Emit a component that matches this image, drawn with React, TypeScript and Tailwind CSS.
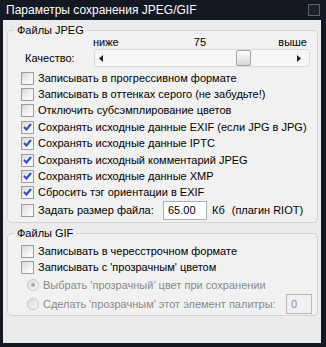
import React from "react";

const font = { fontFamily: '"Liberation Sans", Arial, sans-serif' };

const Check = ({ checked }: { checked?: boolean }) => (
  <span className="relative w-[13px] h-[13px] shrink-0 border border-[#9c9c9c] bg-gradient-to-br from-[#d8d8d8] via-[#f0f0f0] to-white">
    {checked && (
      <svg className="absolute left-[1px] top-[1px]" width="9" height="9" viewBox="0 0 9 9">
        <path d="M1 4 L3.5 6.5 L8 1" fill="none" stroke="#2c4fc4" strokeWidth="2" />
      </svg>
    )}
  </span>
);

const Radio = ({ checked }: { checked?: boolean }) => (
  <span className="relative w-[12px] h-[12px] shrink-0 rounded-full border border-[#c8c8c8] bg-gradient-to-br from-[#dcdcdc] to-[#f8f8f8]">
    {checked && (
      <span className="absolute left-[3px] top-[3px] w-[4px] h-[4px] rounded-full bg-[#a8a8a8]" />
    )}
  </span>
);

const CheckRow = ({ label, checked }: { label: string; checked?: boolean }) => (
  <div className="h-[16.4px] flex items-center gap-[4px] pl-[13px] whitespace-nowrap">
    <Check checked={checked} />
    <span>{label}</span>
  </div>
);

const RadioRow = ({
  label,
  checked,
  children,
}: {
  label: string;
  checked?: boolean;
  children?: React.ReactNode;
}) => (
  <div className="h-[19px] flex items-center gap-[4px] pl-[19px] whitespace-nowrap">
    <Radio checked={checked} />
    <span className="text-[#8a8a8a]">{label}</span>
    {children}
  </div>
);

const jpegOptions: [string, boolean][] = [
  ["Записывать в прогрессивном формате", false],
  ["Записывать в оттенках серого (не забудьте!)", false],
  ["Отключить субсэмплирование цветов", false],
  ["Сохранять исходные данные EXIF (если JPG в JPG)", true],
  ["Сохранять исходные данные IPTC", true],
  ["Сохранять исходный комментарий JPEG", true],
  ["Сохранять исходные данные XMP", true],
  ["Сбросить тэг ориентации в EXIF", true],
];

const App = () => {
  return (
    <div
      className="w-[326px] h-[347px] bg-[#141822] pl-[3px] pr-[5px] pb-[4px] flex flex-col text-[11px] text-black leading-none"
      style={font}
    >
      <div className="h-[20px] flex items-center justify-between pl-[3px] pr-[1px] shrink-0">
        <span className="text-white text-[12px] whitespace-nowrap">Параметры сохранения JPEG/GIF</span>
        <span className="w-[12px] h-[12px] border border-[#5c6270] bg-[#1c212c]" />
      </div>

      <div className="flex-1 bg-[#ececec] pl-[4px] pr-[3px] pt-[3px]">
        <fieldset className="border border-[#d4d4d4] rounded-[4px] bg-[#f1f1f1] pb-[2px]">
          <legend className="ml-[6px] px-[3px] h-[14px] leading-[14px]">Файлы JPEG</legend>
          <div className="h-[11px] grid grid-cols-3 pl-[85px] pr-[10px] items-center">
            <span>ниже</span>
            <span className="text-center">75</span>
            <span className="text-right">выше</span>
          </div>
          <div className="h-[18px] mt-[1px] flex items-center">
            <span className="ml-[17px] w-[69px]">Качество:</span>
            <div className="relative flex-1 mr-[7px] h-[18px] border border-[#dadada] rounded-[3px] bg-[#f6f6f6]">
              <svg className="absolute left-[4px] top-[5px]" width="4" height="7" viewBox="0 0 4 7">
                <path d="M4 0 L0 3.5 L4 7 Z" fill="#222" />
              </svg>
              <svg className="absolute right-[8px] top-[5px]" width="4" height="7" viewBox="0 0 4 7">
                <path d="M0 0 L4 3.5 L0 7 Z" fill="#222" />
              </svg>
              <span className="absolute left-[141px] top-[0px] w-[15px] h-[16px] border border-[#a4a4a4] rounded-[2px] bg-gradient-to-b from-white to-[#d6d6d6]" />
            </div>
          </div>
          <div className="mt-[3px]">
            {jpegOptions.map(([label, checked]) => (
              <CheckRow key={label} label={label} checked={checked} />
            ))}
          </div>
          <div className="h-[19px] flex items-center pl-[13px] whitespace-nowrap">
            <Check />
            <span className="ml-[4px] w-[125px]">Задать размер файла:</span>
            <span className="w-[44px] h-[19px] border border-[#aab0b8] bg-white flex items-center pl-[4px]">
              65.00
            </span>
            <span className="ml-[5px]">Кб</span>
            <span className="ml-[7px]">(плагин RIOT)</span>
          </div>
        </fieldset>

        <fieldset className="mt-[3px] border border-[#d4d4d4] rounded-[4px] bg-[#f1f1f1] pb-[1px]">
          <legend className="ml-[6px] px-[3px] h-[14px] leading-[14px]">Файлы GIF</legend>
          <div className="mt-[3px]">
            <CheckRow label="Записывать в чересстрочном формате" />
            <CheckRow label="Записывать с 'прозрачным' цветом" />
          </div>
          <RadioRow label="Выбрать 'прозрачный' цвет при сохранении" checked />
          <RadioRow label="Сделать 'прозрачным' этот элемент палитры:">
            <span className="ml-auto mr-[5px] w-[26px] h-[20px] border border-[#b8b8b8] bg-[#f0f0f0] text-[#8a8a8a] flex items-center pl-[4px]">
              0
            </span>
          </RadioRow>
        </fieldset>
      </div>
    </div>
  );
};

export default App;
